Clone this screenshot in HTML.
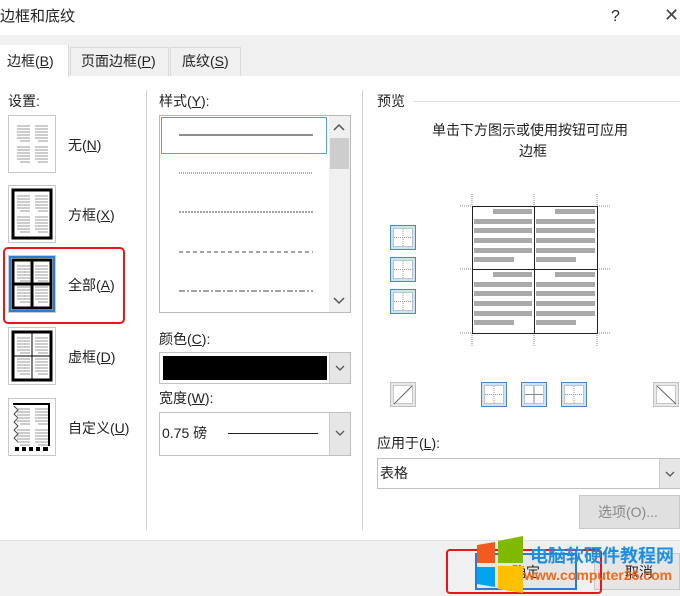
<!DOCTYPE html>
<html><head><meta charset="utf-8"><style>
*{margin:0;padding:0;box-sizing:border-box}
body{width:680px;height:596px;overflow:hidden;background:#fff;position:relative;font-family:"Liberation Sans","Noto Sans CJK SC",sans-serif;font-size:14px;color:#222}
.a{position:absolute}
.t{position:absolute;white-space:nowrap;line-height:18px}
u{text-decoration:underline}
.sb{position:absolute;width:26px;height:25px;border:1px solid #4a86c8;background:#cfe3f7}
.gb{position:absolute;width:26px;height:25px;border:1px solid #c0c0c0;background:#e8e8e8}
</style></head><body>
<div class="t" style="left:0;top:8px;font-size:15px">边框和底纹</div>
<div class="t" style="left:611px;top:8px;font-size:16px">?</div>
<div class="t" style="left:664px;top:6px;font-size:18px;color:#444">✕</div>
<div class="a" style="left:0;top:35px;width:680px;height:41px;background:#f0f0f0"></div>
<div class="a" style="left:0;top:45px;width:69px;height:32px;background:#fff;border-right:1px solid #d8d8d8"></div>
<div class="t" style="left:7px;top:52px">边框(<u>B</u>)</div>
<div class="a" style="left:70px;top:47px;width:99px;height:29px;border:1px solid #dadada;border-bottom:none"></div>
<div class="t" style="left:81px;top:52px">页面边框(<u>P</u>)</div>
<div class="a" style="left:170px;top:47px;width:71px;height:29px;border:1px solid #dadada;border-bottom:none"></div>
<div class="t" style="left:182px;top:52px">底纹(<u>S</u>)</div>

<div class="a" style="left:146px;top:90px;width:1px;height:440px;background:#d0d0d0"></div>
<div class="a" style="left:362px;top:90px;width:1px;height:440px;background:#d0d0d0"></div>

<div class="t" style="left:8px;top:92px">设置:</div>
<svg class="a" style="left:0;top:0" width="140" height="470">
<defs>
<g id="ln" stroke="#999" stroke-width="1">
<path d="M6 5h13M6 8h13M6 11h13M6 14h13M6 17h13M9 20h10M6 26h13M6 29h13M6 32h13M6 35h13M6 38h13M9 41h10M24 5h13M24 8h13M24 11h13M24 14h13M24 17h13M27 20h10M24 26h13M24 29h13M24 32h13M24 35h13M24 38h13M27 41h10"/>
</g>
</defs>
<rect x="8.5" y="115.5" width="47" height="57" fill="#fff" stroke="#c8c8c8"/>
<use href="#ln" x="11" y="121"/>
<rect x="8.5" y="185.5" width="47" height="57" fill="#fff" stroke="#c8c8c8"/>
<rect x="13" y="190" width="38" height="48" fill="none" stroke="#000" stroke-width="3"/>
<use href="#ln" x="11" y="191"/>
<rect x="8.5" y="255.5" width="47" height="57" fill="#fff" stroke="#999" stroke-dasharray="1 1"/>
<rect x="10" y="257" width="44" height="54" fill="none" stroke="#2a7ad8" stroke-width="2"/>
<rect x="13" y="260" width="38" height="48" fill="none" stroke="#000" stroke-width="3"/>
<path d="M32 260v48M13 284h38" stroke="#000" stroke-width="3"/>
<use href="#ln" x="11" y="261"/>
<rect x="4" y="248" width="120" height="75" rx="4" fill="none" stroke="#e8161b" stroke-width="2"/>
<rect x="8.5" y="327.5" width="47" height="57" fill="#fff" stroke="#c8c8c8"/>
<rect x="13" y="332" width="38" height="48" fill="none" stroke="#000" stroke-width="3"/>
<path d="M32 332v48M13 356h38" stroke="#000" stroke-width="1"/>
<use href="#ln" x="11" y="333"/>
<rect x="8.5" y="398.5" width="47" height="57" fill="#fff" stroke="#c8c8c8"/>
<path d="M13 404h36v42" stroke="#000" stroke-width="2" fill="none"/>
<path d="M14 406l4 4-4 4 4 4-4 4 4 4-4 4 4 4-4 4 4 4" stroke="#444" fill="none"/>
<path d="M15 449h4M22 449h4M29 449h4M36 449h4M43 449h5" stroke="#000" stroke-width="4"/>
<use href="#ln" x="11" y="404"/>
</svg>
<div class="t" style="left:68px;top:136px">无(<u>N</u>)</div>
<div class="t" style="left:68px;top:206px">方框(<u>X</u>)</div>
<div class="t" style="left:68px;top:276px">全部(<u>A</u>)</div>
<div class="t" style="left:68px;top:348px">虚框(<u>D</u>)</div>
<div class="t" style="left:68px;top:419px">自定义(<u>U</u>)</div>

<div class="t" style="left:159px;top:92px">样式(<u>Y</u>):</div>
<div class="a" style="left:159px;top:115px;width:192px;height:198px;border:1px solid #b8b8b8;background:#fff"></div>
<div class="a" style="left:161px;top:117px;width:166px;height:37px;border:1px solid #5aa0e0"></div>
<div class="a" style="left:329px;top:116px;width:21px;height:196px;background:#f0f0f0"></div>
<div class="a" style="left:330px;top:138px;width:19px;height:31px;background:#cdcdcd"></div>
<svg class="a" style="left:150px;top:100px" width="210" height="220">
<path d="M29 35h134" stroke="#222" stroke-width="1"/>
<path d="M29 73h134" stroke="#555" stroke-dasharray="1 1"/>
<path d="M29 112h134" stroke="#444" stroke-dasharray="2 1"/>
<path d="M29 152h134" stroke="#444" stroke-dasharray="4 3"/>
<path d="M29 191h134" stroke="#444" stroke-dasharray="6 2 2 2"/>
<path d="M184 30l5-5 5 5M184 198l5 5 5-5" stroke="#555" stroke-width="1.5" fill="none"/>
</svg>

<div class="t" style="left:159px;top:330px">颜色(<u>C</u>):</div>
<div class="a" style="left:159px;top:352px;width:192px;height:32px;border:1px solid #c0c0c0;background:#fff"></div>
<div class="a" style="left:163px;top:356px;width:164px;height:24px;background:#000"></div>
<div class="a" style="left:329px;top:353px;width:21px;height:30px;background:#e6e6e6;border-left:1px solid #ccc"></div>
<div class="t" style="left:159px;top:389px">宽度(<u>W</u>):</div>
<div class="a" style="left:159px;top:412px;width:192px;height:44px;border:1px solid #c0c0c0;background:#fff"></div>
<div class="a" style="left:329px;top:413px;width:21px;height:42px;background:#e6e6e6;border-left:1px solid #ccc"></div>
<div class="t" style="left:162px;top:424px">0.75 磅</div>
<div class="a" style="left:228px;top:433px;width:90px;height:1px;background:#222"></div>
<svg class="a" style="left:330px;top:355px" width="20" height="100"><path d="M6 11l4 4 4-4M6 76l4 4 4-4" stroke="#555" fill="none" stroke-width="1.3"/></svg>

<div class="t" style="left:377px;top:92px">预览</div>
<div class="a" style="left:413px;top:101px;width:267px;height:1px;background:#e0e0e0"></div>
<div class="t" style="left:432px;top:121px">单击下方图示或使用按钮可应用</div>
<div class="t" style="left:519px;top:142px">边框</div>
<svg class="a" style="left:360px;top:180px" width="320" height="240">
<g stroke="#888" stroke-dasharray="1 1">
<path d="M100 26h12M237 26h13M100 89h12M237 89h13M100 153h12M237 153h13M112 14v12M174 14v12M237 14v12M112 153v13M174 153v13M237 153v13"/>
</g>
<g fill="#aaa">
<rect x="133" y="29" width="39" height="5"/><rect x="114" y="39" width="58" height="5"/><rect x="114" y="48" width="58" height="5"/><rect x="114" y="58" width="58" height="5"/><rect x="114" y="68" width="58" height="5"/><rect x="114" y="77" width="40" height="5"/>
<rect x="195" y="29" width="40" height="5"/><rect x="176" y="39" width="59" height="5"/><rect x="176" y="48" width="59" height="5"/><rect x="176" y="58" width="59" height="5"/><rect x="176" y="68" width="59" height="5"/><rect x="176" y="77" width="40" height="5"/>
<rect x="133" y="92" width="39" height="5"/><rect x="114" y="102" width="58" height="5"/><rect x="114" y="111" width="58" height="5"/><rect x="114" y="121" width="58" height="5"/><rect x="114" y="131" width="58" height="5"/><rect x="114" y="140" width="40" height="5"/>
<rect x="195" y="92" width="40" height="5"/><rect x="176" y="102" width="59" height="5"/><rect x="176" y="111" width="59" height="5"/><rect x="176" y="121" width="59" height="5"/><rect x="176" y="131" width="59" height="5"/><rect x="176" y="140" width="40" height="5"/>
</g>
<rect x="112.5" y="26.5" width="125" height="127" fill="none" stroke="#222"/>
<path d="M174.5 26v127M112 89.5h125" stroke="#222"/>
</svg>
<div class="sb" style="left:390px;top:225px"></div>
<div class="sb" style="left:390px;top:257px"></div>
<div class="sb" style="left:390px;top:289px"></div>
<div class="gb" style="left:390px;top:382px"></div>
<div class="sb" style="left:481px;top:382px"></div>
<div class="sb" style="left:521px;top:382px"></div>
<div class="sb" style="left:561px;top:382px"></div>
<div class="gb" style="left:653px;top:382px"></div>
<svg class="a" style="left:0;top:0" width="680" height="420">
<g fill="#fff" stroke="#999" stroke-dasharray="1 1">
<rect x="393.5" y="228.5" width="19" height="18"/><rect x="393.5" y="260.5" width="19" height="18"/><rect x="393.5" y="292.5" width="19" height="18"/>
<rect x="484.5" y="385.5" width="19" height="18"/><rect x="524.5" y="385.5" width="19" height="18"/><rect x="564.5" y="385.5" width="19" height="18"/>
<rect x="393.5" y="385.5" width="19" height="18"/><rect x="656.5" y="385.5" width="19" height="18"/>
</g>
<g stroke="#999" stroke-dasharray="1 1"><path d="M403 229v18M394 237.5h18M403 261v18M394 269.5h18M403 293v18M394 301.5h18M494 386v18M485 394.5h18M574 386v18M565 394.5h18"/></g>
<path d="M534 386v18M525 394.5h18" stroke="#888"/>
<path d="M394 404l18-18M657 386l19 18" stroke="#666"/>
</svg>

<div class="t" style="left:377px;top:434px">应用于(<u>L</u>):</div>
<div class="a" style="left:377px;top:458px;width:303px;height:31px;border:1px solid #c0c0c0;background:#fff"></div>
<div class="a" style="left:659px;top:459px;width:21px;height:29px;background:#e6e6e6;border-left:1px solid #ccc"></div>
<svg class="a" style="left:660px;top:465px" width="20" height="20"><path d="M6 7l4 4 4-4" stroke="#555" fill="none" stroke-width="1.3"/></svg>
<div class="t" style="left:380px;top:464px">表格</div>
<div class="a" style="left:579px;top:495px;width:101px;height:34px;border:1px solid #c8c8c8;background:#e0e0e0"></div>
<div class="t" style="left:598px;top:503px;color:#888">选项(O)...</div>

<div class="a" style="left:0;top:540px;width:680px;height:56px;background:#f0f0f0;border-top:1px solid #e0e0e0"></div>
<div class="a" style="left:475px;top:553px;width:102px;height:37px;border:2px solid #2a7ad8;background:#e5e5e5"></div>
<div class="t" style="left:512px;top:563px">确定</div>
<div class="a" style="left:594px;top:553px;width:86px;height:37px;border:1px solid #c8c8c8;background:#e5e5e5"></div>
<div class="t" style="left:625px;top:563px">取消</div>
<div class="a" style="left:446px;top:549px;width:156px;height:45px;border:2px solid #e8161b;border-radius:4px"></div>
<svg class="a" style="left:470px;top:536px" width="60" height="58">
<path d="M7 9l18-3v21H7z" fill="#f25a22"/>
<path d="M28 5l25-5v27H28z" fill="#7fba00"/>
<path d="M7 31h18v20l-18-3z" fill="#00a4ef"/>
<path d="M28 30h25v27l-25-4z" fill="#ffc000"/>
</svg>
<div class="t" style="left:530px;top:545px;font-size:18px;line-height:22px;font-weight:bold;color:#1e8fe0">电脑软硬件教程网</div>
<div class="t" style="left:524px;top:566px;font-size:14px;font-weight:bold;color:#f26a1b">www.computer26.com</div>
</body></html>
